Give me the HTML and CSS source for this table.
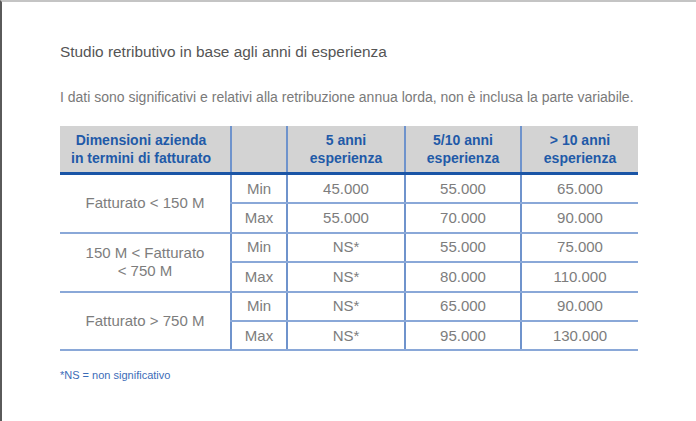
FILE: index.html
```html
<!DOCTYPE html>
<html lang="it">
<head>
<meta charset="utf-8">
<title>Studio retributivo</title>
<link rel="stylesheet" href="styles.css">
</head>
<body>
<div class="page">
  <h1 class="title">Studio retributivo in base agli anni di esperienza</h1>
  <p class="subtitle">I dati sono significativi e relativi alla retribuzione annua lorda, non è inclusa la parte variabile.</p>
  <table class="salary">
    <colgroup>
      <col class="c1"><col class="c2"><col class="c3"><col class="c4"><col class="c5">
    </colgroup>
    <thead>
      <tr>
        <th class="dim">Dimensioni azienda<br>in termini di fatturato</th>
        <th></th>
        <th>5 anni<br>esperienza</th>
        <th>5/10 anni<br>esperienza</th>
        <th>&gt; 10 anni<br>esperienza</th>
      </tr>
    </thead>
    <tbody>
      <tr class="first"><td rowspan="2" class="group">Fatturato &lt; 150 M</td><td>Min</td><td>45.000</td><td>55.000</td><td>65.000</td></tr>
      <tr class="second"><td>Max</td><td>55.000</td><td>70.000</td><td>90.000</td></tr>
      <tr class="first"><td rowspan="2" class="group">150 M &lt; Fatturato<br>&lt; 750 M</td><td>Min</td><td>NS*</td><td>55.000</td><td>75.000</td></tr>
      <tr class="second"><td>Max</td><td>NS*</td><td>80.000</td><td>110.000</td></tr>
      <tr class="first"><td rowspan="2" class="group">Fatturato &gt; 750 M</td><td>Min</td><td>NS*</td><td>65.000</td><td>90.000</td></tr>
      <tr class="second"><td>Max</td><td>NS*</td><td>95.000</td><td>130.000</td></tr>
    </tbody>
  </table>
  <p class="note">*NS = non significativo</p>
</div>
</body>
</html>
```
FILE: styles.css
```css
html, body {
  margin: 0;
  padding: 0;
  background: #ffffff;
}
body {
  font-family: "Liberation Sans", Arial, sans-serif;
  height: 421px;
  overflow: hidden;
}
.page {
  box-sizing: border-box;
  height: 421px;
  border-top: 2px solid #c4c4c4;
  border-left: 2px solid #5a5a5a;
  padding: 40px 0 0 58px;
}
.title {
  margin: 0;
  font-size: 15.4px;
  font-weight: normal;
  color: #555555;
  line-height: 20px;
}
.subtitle {
  margin: 26px 0 0 0;
  font-size: 14px;
  color: #7a7a7a;
  line-height: 18px;
  letter-spacing: 0;
  white-space: nowrap;
}
.salary {
  margin-top: 20px;
  border-collapse: collapse;
  width: 578px;
  table-layout: fixed;
}
.c1 { width: 171px; }
.c2 { width: 56px; }
.c3 { width: 118px; }
.c4 { width: 116px; }
.c5 { width: 117px; }
.salary th {
  background: #d3d3d3;
  color: #1f5aa8;
  font-size: 14px;
  font-weight: bold;
  line-height: 18px;
  height: 46px;
  padding: 0;
  border-bottom: 3px solid #1a55a6;
  border-left: 2px solid #6f93cc;
  text-align: center;
  vertical-align: middle;
}
.salary th:first-child {
  border-left: none;
}
.salary th.dim {
  padding-right: 8px;
}
.salary td {
  color: #7d7d7d;
  font-size: 15px;
  line-height: 18px;
  text-align: center;
  vertical-align: middle;
  height: 27.4px;
  padding: 0;
  border-left: 2px solid #6f93cc;
  border-bottom: 2px solid #8aa8d8;
}
.salary td.group {
  border-left: none;
}
.note {
  margin: 17px 0 0 0;
  font-size: 11px;
  color: #3c6cb8;
  line-height: 14px;
}
```
